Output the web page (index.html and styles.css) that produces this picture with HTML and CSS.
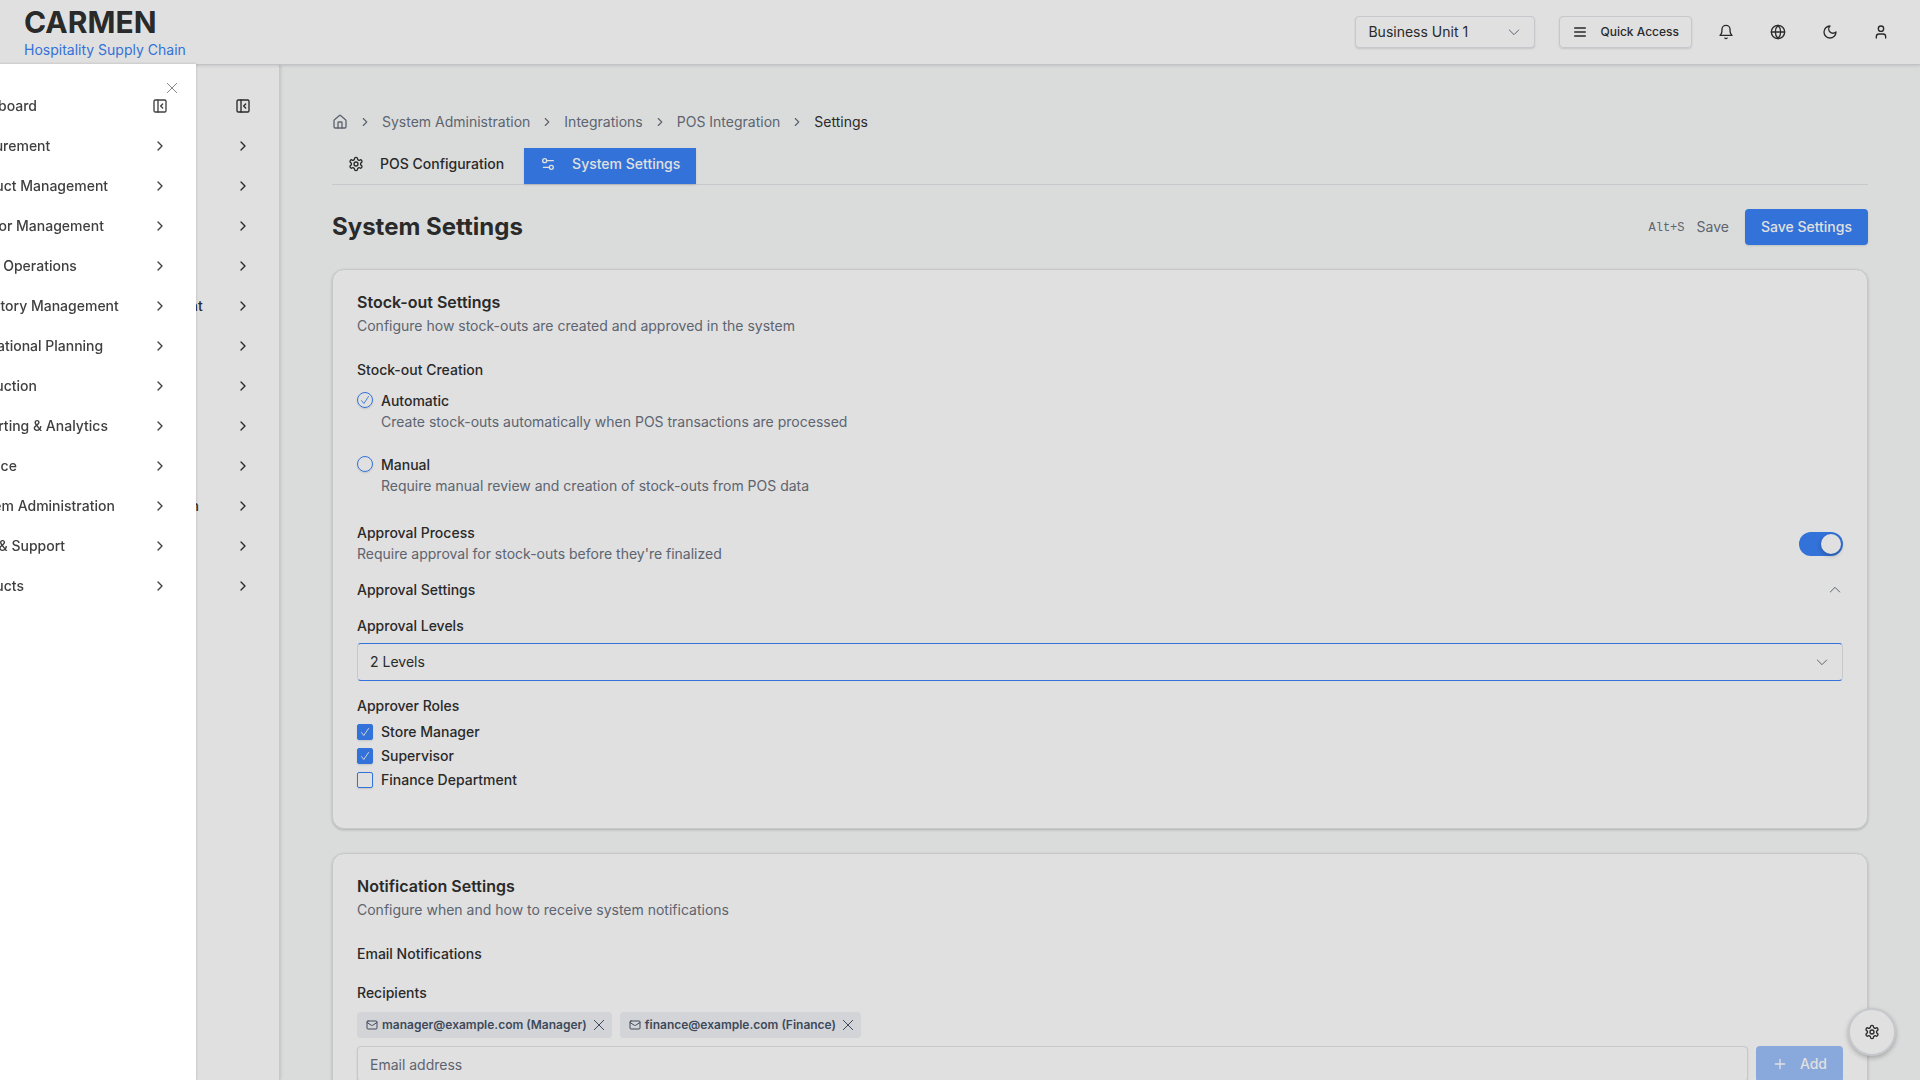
FILE: index.html
```html
<!DOCTYPE html>
<html lang="en">
<head>
<meta charset="utf-8">
<title>System Settings</title>
<link rel="stylesheet" href="styles.css">
</head>
<body>
<svg class="sprite" aria-hidden="true">
  <symbol id="chevron-right" viewBox="0 0 24 24"><path d="m9 18 6-6-6-6"/></symbol>
  <symbol id="chevron-down" viewBox="0 0 24 24"><path d="m5 9 7 7 7-7"/></symbol>
  <symbol id="chevron-up" viewBox="0 0 24 24"><path d="m5 15 7-7 7 7"/></symbol>
  <symbol id="panel" viewBox="0 0 24 24"><rect width="18" height="18" x="3" y="3" rx="2"/><path d="M9 3v18M16 15l-3-3 3-3"/></symbol>
  <symbol id="close" viewBox="0 0 24 24"><path d="M19 5 5 19M5 5l14 14"/></symbol>
  <symbol id="menu" viewBox="0 0 24 24"><path d="M4 6h16M4 12h16M4 18h16"/></symbol>
  <symbol id="bell" viewBox="0 0 24 24"><path d="M6 8a6 6 0 0 1 12 0c0 7 3 9 3 9H3s3-2 3-9M10.3 21a1.94 1.94 0 0 0 3.4 0"/></symbol>
  <symbol id="globe" viewBox="0 0 24 24"><circle cx="12" cy="12" r="10"/><path d="M12 2a14.5 14.5 0 0 0 0 20 14.5 14.5 0 0 0 0-20M2 12h20"/></symbol>
  <symbol id="moon" viewBox="0 0 24 24"><path d="M12 3a6 6 0 0 0 9 9 9 9 0 1 1-9-9Z"/></symbol>
  <symbol id="user" viewBox="0 0 24 24"><path d="M19 21v-2a4 4 0 0 0-4-4H9a4 4 0 0 0-4 4v2"/><circle cx="12" cy="7" r="4"/></symbol>
  <symbol id="home" viewBox="0 0 24 24"><path d="M15 21v-8a1 1 0 0 0-1-1h-4a1 1 0 0 0-1 1v8"/><path d="M3 10a2 2 0 0 1 .709-1.528l7-5.999a2 2 0 0 1 2.582 0l7 5.999A2 2 0 0 1 21 10v9a2 2 0 0 1-2 2H5a2 2 0 0 1-2-2z"/></symbol>
  <symbol id="cog" viewBox="0 0 24 24"><path d="M12.22 2h-.44a2 2 0 0 0-2 2v.18a2 2 0 0 1-1 1.73l-.43.25a2 2 0 0 1-2 0l-.15-.08a2 2 0 0 0-2.73.73l-.22.38a2 2 0 0 0 .73 2.73l.15.1a2 2 0 0 1 1 1.72v.51a2 2 0 0 1-1 1.74l-.15.09a2 2 0 0 0-.73 2.73l.22.38a2 2 0 0 0 2.73.73l.15-.08a2 2 0 0 1 2 0l.43.25a2 2 0 0 1 1 1.73V20a2 2 0 0 0 2 2h.44a2 2 0 0 0 2-2v-.18a2 2 0 0 1 1-1.73l.43-.25a2 2 0 0 1 2 0l.15.08a2 2 0 0 0 2.73-.73l.22-.39a2 2 0 0 0-.73-2.73l-.15-.08a2 2 0 0 1-1-1.74v-.5a2 2 0 0 1 1-1.74l.15-.09a2 2 0 0 0 .73-2.73l-.22-.38a2 2 0 0 0-2.73-.73l-.15.08a2 2 0 0 1-2 0l-.43-.25a2 2 0 0 1-1-1.73V4a2 2 0 0 0-2-2z"/><circle cx="12" cy="12" r="3"/></symbol>
  <symbol id="sliders" viewBox="0 0 24 24"><path d="M20 7h-9M14 17H5"/><circle cx="17" cy="17" r="3"/><circle cx="7" cy="7" r="3"/></symbol>
  <symbol id="mail" viewBox="0 0 24 24"><rect width="20" height="16" x="2" y="4" rx="2"/><path d="m22 7-8.97 5.7a1.94 1.94 0 0 1-2.06 0L2 7"/></symbol>
  <symbol id="plus" viewBox="0 0 24 24"><path d="M5 12h14M12 5v14"/></symbol>
  <symbol id="check" viewBox="0 0 24 24"><path d="m6 13 4 5 8-12"/></symbol>
</svg>

<header class="topbar">
  <div class="brand">
    <strong class="brand-name">CARMEN</strong>
    <span class="brand-sub">Hospitality Supply Chain</span>
  </div>
  <div class="topbar-tools">
    <div class="select-wrap unit-select">
      <select class="select" aria-label="Business unit"><option>Business Unit 1</option></select>
      <svg class="icon thin"><use href="#chevron-down"/></svg>
    </div>
    <button class="quick" type="button"><svg class="icon"><use href="#menu"/></svg>Quick Access</button>
    <div class="icon-buttons">
      <button class="icon-button" type="button" aria-label="Notifications"><svg class="icon"><use href="#bell"/></svg></button>
      <button class="icon-button" type="button" aria-label="Language"><svg class="icon"><use href="#globe"/></svg></button>
      <button class="icon-button" type="button" aria-label="Theme"><svg class="icon"><use href="#moon"/></svg></button>
      <button class="icon-button account" type="button" aria-label="Account"><svg class="icon"><use href="#user"/></svg></button>
    </div>
  </div>
</header>

<div class="shell">
  <nav class="sidebar" aria-label="Main">
    <ul class="menu">
      <li><a class="menu-item" href="#"><span>Dashboard</span><svg class="icon"><use href="#panel"/></svg></a></li>
      <li><a class="menu-item" href="#"><span>Procurement</span><svg class="icon"><use href="#chevron-right"/></svg></a></li>
      <li><a class="menu-item" href="#"><span>Product Management</span><svg class="icon"><use href="#chevron-right"/></svg></a></li>
      <li><a class="menu-item" href="#"><span>Vendor Management</span><svg class="icon"><use href="#chevron-right"/></svg></a></li>
      <li><a class="menu-item" href="#"><span>Store Operations</span><svg class="icon"><use href="#chevron-right"/></svg></a></li>
      <li><a class="menu-item" href="#"><span>Inventory Management</span><svg class="icon"><use href="#chevron-right"/></svg></a></li>
      <li><a class="menu-item" href="#"><span>Operational Planning</span><svg class="icon"><use href="#chevron-right"/></svg></a></li>
      <li><a class="menu-item" href="#"><span>Production</span><svg class="icon"><use href="#chevron-right"/></svg></a></li>
      <li><a class="menu-item" href="#"><span>Reporting &amp; Analytics</span><svg class="icon"><use href="#chevron-right"/></svg></a></li>
      <li><a class="menu-item" href="#"><span>Finance</span><svg class="icon"><use href="#chevron-right"/></svg></a></li>
      <li><a class="menu-item" href="#"><span>System Administration</span><svg class="icon"><use href="#chevron-right"/></svg></a></li>
      <li><a class="menu-item" href="#"><span>Help &amp; Support</span><svg class="icon"><use href="#chevron-right"/></svg></a></li>
      <li><a class="menu-item" href="#"><span>Products</span><svg class="icon"><use href="#chevron-right"/></svg></a></li>
    </ul>
  </nav>

  <main class="main">
    <nav class="breadcrumb" aria-label="Breadcrumb">
      <a href="#" aria-label="Home"><svg class="icon"><use href="#home"/></svg></a>
      <svg class="icon small"><use href="#chevron-right"/></svg>
      <a href="#">System Administration</a>
      <svg class="icon small"><use href="#chevron-right"/></svg>
      <a href="#">Integrations</a>
      <svg class="icon small"><use href="#chevron-right"/></svg>
      <a href="#">POS Integration</a>
      <svg class="icon small"><use href="#chevron-right"/></svg>
      <span class="current">Settings</span>
    </nav>

    <div class="tabs">
      <a class="tab" href="#"><svg class="icon"><use href="#cog"/></svg>POS Configuration</a>
      <a class="tab active" href="#"><svg class="icon"><use href="#sliders"/></svg>System Settings</a>
    </div>

    <div class="page-head">
      <h1>System Settings</h1>
      <div class="page-actions">
        <kbd>Alt+S</kbd>
        <span class="hint">Save</span>
        <button class="primary" type="button">Save Settings</button>
      </div>
    </div>

    <section class="card">
      <h2>Stock-out Settings</h2>
      <p class="lead">Configure how stock-outs are created and approved in the system</p>
      <fieldset class="radios">
        <legend>Stock-out Creation</legend>
        <div class="choice">
          <span class="control"><input type="radio" name="creation" id="automatic" checked><svg class="icon tick"><use href="#check"/></svg></span>
          <div><label for="automatic">Automatic</label><p>Create stock-outs automatically when POS transactions are processed</p></div>
        </div>
        <div class="choice">
          <span class="control"><input type="radio" name="creation" id="manual"></span>
          <div><label for="manual">Manual</label><p>Require manual review and creation of stock-outs from POS data</p></div>
        </div>
      </fieldset>
      <div class="toggle-row">
        <div><label for="approval">Approval Process</label><p>Require approval for stock-outs before they're finalized</p></div>
        <input class="switch" type="checkbox" role="switch" id="approval" checked>
      </div>
      <button class="collapse" type="button">Approval Settings<svg class="icon thin"><use href="#chevron-up"/></svg></button>
      <div class="field">
        <label for="levels">Approval Levels</label>
        <div class="select-wrap levels">
          <select class="select" id="levels"><option>2 Levels</option></select>
          <svg class="icon thin"><use href="#chevron-down"/></svg>
        </div>
      </div>
      <fieldset class="roles">
        <legend>Approver Roles</legend>
        <div class="role"><span class="control"><input type="checkbox" id="store-manager" checked><svg class="icon tick light"><use href="#check"/></svg></span><label for="store-manager">Store Manager</label></div>
        <div class="role"><span class="control"><input type="checkbox" id="supervisor" checked><svg class="icon tick light"><use href="#check"/></svg></span><label for="supervisor">Supervisor</label></div>
        <div class="role"><span class="control"><input type="checkbox" id="finance"></span><label for="finance">Finance Department</label></div>
      </fieldset>
    </section>

    <section class="card">
      <h2>Notification Settings</h2>
      <p class="lead">Configure when and how to receive system notifications</p>
      <h3>Email Notifications</h3>
      <label class="recipients" for="email">Recipients</label>
      <div class="chips">
        <span class="chip"><svg class="icon mini"><use href="#mail"/></svg>manager@example.com (Manager)<button type="button" aria-label="Remove manager"><svg class="icon"><use href="#close"/></svg></button></span>
        <span class="chip"><svg class="icon mini"><use href="#mail"/></svg>finance@example.com (Finance)<button type="button" aria-label="Remove finance"><svg class="icon"><use href="#close"/></svg></button></span>
      </div>
      <div class="add-row">
        <input class="text-input" type="email" id="email" placeholder="Email address">
        <button class="primary add" type="button" disabled><svg class="icon"><use href="#plus"/></svg>Add</button>
      </div>
    </section>
  </main>
</div>

<button class="fab" type="button" aria-label="Settings"><svg class="icon"><use href="#cog"/></svg></button>
<div class="overlay"></div>

<aside class="drawer" aria-label="Menu">
  <button class="drawer-close" type="button" aria-label="Close"><svg class="icon"><use href="#close"/></svg></button>
  <ul class="menu">
    <li><a class="menu-item" href="#"><span>Dashboard</span><svg class="icon"><use href="#panel"/></svg></a></li>
    <li><a class="menu-item" href="#"><span>Procurement</span><svg class="icon"><use href="#chevron-right"/></svg></a></li>
    <li><a class="menu-item" href="#"><span>Product Management</span><svg class="icon"><use href="#chevron-right"/></svg></a></li>
    <li><a class="menu-item" href="#"><span>Vendor Management</span><svg class="icon"><use href="#chevron-right"/></svg></a></li>
    <li><a class="menu-item" href="#"><span>Store Operations</span><svg class="icon"><use href="#chevron-right"/></svg></a></li>
    <li><a class="menu-item" href="#"><span>Inventory Management</span><svg class="icon"><use href="#chevron-right"/></svg></a></li>
    <li><a class="menu-item" href="#"><span>Operational Planning</span><svg class="icon"><use href="#chevron-right"/></svg></a></li>
    <li><a class="menu-item" href="#"><span>Production</span><svg class="icon"><use href="#chevron-right"/></svg></a></li>
    <li><a class="menu-item" href="#"><span>Reporting &amp; Analytics</span><svg class="icon"><use href="#chevron-right"/></svg></a></li>
    <li><a class="menu-item" href="#"><span>Finance</span><svg class="icon"><use href="#chevron-right"/></svg></a></li>
    <li><a class="menu-item" href="#"><span>System Administration</span><svg class="icon"><use href="#chevron-right"/></svg></a></li>
    <li><a class="menu-item" href="#"><span>Help &amp; Support</span><svg class="icon"><use href="#chevron-right"/></svg></a></li>
    <li><a class="menu-item" href="#"><span>Products</span><svg class="icon"><use href="#chevron-right"/></svg></a></li>
  </ul>
</aside>
</body>
</html>
```
FILE: styles.css
```css
:root {
  --ink: #303030;
  --muted: #6b7280;
  --line: #e2e4e9;
  --blue: #3b82f6;
  --page: #f9fbfa;
}

* { box-sizing: border-box; }

html { overflow: hidden; }

body {
  margin: 0;
  height: 100vh;
  display: flex;
  flex-direction: column;
  overflow: hidden;
  font: 14px/20px Inter, "Liberation Sans", sans-serif;
  color: var(--ink);
  background: var(--page);
}

button, input, select { font: inherit; color: inherit; margin: 0; }
button { border: 0; padding: 0; background: none; }
a { color: inherit; text-decoration: none; }
h1, h2, h3, p, ul, fieldset, legend { margin: 0; padding: 0; border: 0; }
fieldset { min-width: 0; }
label, legend, h3 { font-size: 14px; font-weight: 500; line-height: 20px; }

.sprite { display: none; }
.icon {
  width: 16px;
  height: 16px;
  flex: none;
  display: block;
  fill: none;
  stroke: currentColor;
  stroke-width: 2;
  stroke-linecap: round;
  stroke-linejoin: round;
}
.small { width: 14px; height: 14px; }
.mini { width: 12px; height: 12px; }
.thin { stroke-width: 1.5; color: var(--muted); }

/* Top bar */
.topbar {
  flex: none;
  height: 65px;
  padding: 0 24px;
  display: flex;
  align-items: center;
  justify-content: space-between;
  background: #fff;
  border-bottom: 1px solid #dcdee3;
  box-shadow: 0 1px 3px rgba(0, 0, 0, .12);
  z-index: 2;
}
.brand { display: flex; flex-direction: column; }
.brand-name { font-size: 30px; line-height: 36px; font-weight: 700; }
.brand-sub { color: var(--blue); }
.topbar-tools { display: flex; align-items: center; gap: 24px; }
.select-wrap { display: grid; align-items: center; }
.select-wrap > * { grid-area: 1 / 1; }
.select-wrap .icon { justify-self: end; margin-right: 13px; pointer-events: none; }
.select {
  appearance: none;
  width: 100%;
  height: 32px;
  padding: 0 12px;
  border: 1px solid var(--line);
  border-radius: 4px;
  background: #fff;
  box-shadow: 0 1px 2px rgba(0, 0, 0, .12);
}
.unit-select { width: 180px; }
.quick {
  height: 32px;
  padding: 0 12px;
  display: flex;
  align-items: center;
  gap: 12px;
  font-size: 12px;
  font-weight: 500;
  border: 1px solid var(--line);
  border-radius: 4px;
  box-shadow: 0 1px 2px rgba(0, 0, 0, .12);
}
.icon-buttons { display: flex; gap: 20px; margin-left: -6px; }
.icon-button { width: 32px; height: 32px; display: grid; place-items: center; }
.account { width: 30px; }

/* Navigation */
.shell { flex: 1; min-height: 0; display: flex; }
.sidebar {
  flex: none;
  width: 280px;
  padding-top: 21px;
  background: #fff;
  border-right: 1px solid var(--line);
  box-shadow: 1px 0 3px rgba(0, 0, 0, .12);
  z-index: 1;
}
.menu { list-style: none; }
.menu-item {
  height: 40px;
  padding: 0 28px 0 48px;
  display: flex;
  align-items: center;
  justify-content: space-between;
  font-weight: 500;
  white-space: nowrap;
}

.drawer {
  position: fixed;
  top: 64px;
  bottom: 0;
  left: -84px;
  width: 280px;
  padding-top: 22px;
  background: #fff;
  box-shadow: 0 0 3px rgba(0, 0, 0, .2);
  color: #404040;
  z-index: 5;
}
.drawer-close { position: absolute; top: 16px; right: 16px; color: #858585; }
.drawer-close .icon, .chip button .icon { stroke-width: 1.5; }
.overlay { position: fixed; inset: 0; background: rgba(0, 0, 0, .12); z-index: 4; }

/* Content */
.main { flex: 1; min-width: 0; padding: 47px 52px; }
.breadcrumb { display: flex; align-items: center; gap: 10px; height: 20px; color: var(--muted); }
.breadcrumb .current { color: var(--ink); }
.tabs { display: flex; gap: 4px; margin-top: 16px; border-bottom: 1px solid var(--line); }
.tab { height: 36px; padding: 0 16px 4px; display: flex; align-items: center; gap: 16px; font-weight: 500; }
.tab.active { background: var(--blue); color: #fff; box-shadow: 0 1px 2px rgba(0, 0, 0, .12); }
.page-head { display: flex; justify-content: space-between; align-items: center; margin-top: 24px; }
h1 { font-size: 24px; line-height: 32px; font-weight: 700; }
.page-actions { display: flex; align-items: center; color: var(--muted); }
kbd { font: 12px/20px "Liberation Mono", monospace; padding-top: 2px; }
.hint { margin: 0 16px 0 12px; }
.primary {
  height: 36px;
  padding: 0 16px;
  border-radius: 4px;
  background: var(--blue);
  color: #fff;
  font-weight: 500;
  box-shadow: 0 1px 2px rgba(0, 0, 0, .12);
}

.card {
  margin-top: 24px;
  padding: 24px;
  background: #fff;
  border: 1px solid var(--line);
  border-radius: 12px;
  box-shadow: 0 1px 3px rgba(0, 0, 0, .2);
}
h2 { font-size: 16px; line-height: 16px; font-weight: 600; }
.lead { margin: 6px 0 24px; color: var(--muted); }
.choice { display: flex; gap: 8px; margin-top: 23px; }
.choice:first-of-type { margin-top: 11px; }
.choice p, .toggle-row p { margin-top: 1px; color: var(--muted); }
.choice label, .toggle-row label { display: block; }
.control { display: grid; place-items: center; }
.choice .control { align-self: start; padding-top: 1px; }
.control > * { grid-area: 1 / 1; }
.control input {
  appearance: none;
  width: 16px;
  height: 16px;
  border: 1px solid var(--blue);
  border-radius: 2px;
  box-shadow: 0 1px 2px rgba(0, 0, 0, .12);
}
.control input[type="radio"] { border-radius: 50%; }
.control input[type="checkbox"]:checked { background: var(--blue); }
.tick { width: 14px; height: 14px; stroke-width: 1.5; color: var(--blue); pointer-events: none; }
.tick.light { color: #fff; }

.toggle-row { display: flex; justify-content: space-between; align-items: center; margin-top: 27px; }
.switch { appearance: none; width: 44px; height: 24px; padding: 2px; border-radius: 12px; background: var(--blue); }
.switch::before {
  content: "";
  display: block;
  width: 20px;
  height: 20px;
  margin-left: 20px;
  border-radius: 50%;
  background: #fff;
  box-shadow: 0 2px 4px rgba(0, 0, 0, .25);
}
.collapse { width: 100%; display: flex; justify-content: space-between; align-items: center; margin-top: 16px; font-weight: 500; }
.field { display: flex; flex-direction: column; gap: 7px; margin-top: 16px; }
.levels .select { height: 38px; border-color: var(--blue) var(--line); box-shadow: none; }
.roles { margin-top: 15px; padding-bottom: 12px; }
.role { display: flex; align-items: center; gap: 8px; height: 24px; }
.role:first-of-type { margin-top: 4px; }

.recipients { display: block; margin-top: 19px; }
.chips { display: flex; gap: 8px; margin: 9px 0 8px; }
.chip {
  height: 26px;
  padding: 0 5px 0 9px;
  display: flex;
  align-items: center;
  gap: 4px;
  border-radius: 4px;
  background: #f1f2f5;
  color: #475569;
  font-size: 12px;
  font-weight: 600;
}
.add-row { display: flex; gap: 8px; }
.text-input {
  flex: 1;
  min-width: 0;
  height: 36px;
  padding: 0 12px;
  border: 1px solid var(--line);
  border-radius: 4px;
  background: #fff;
  box-shadow: 0 1px 2px rgba(0, 0, 0, .12);
}
.text-input::placeholder { color: var(--muted); opacity: 1; }
.add { display: flex; align-items: center; gap: 12px; background: #9dc0fa; box-shadow: none; }

.fab {
  position: fixed;
  right: 24px;
  bottom: 24px;
  width: 48px;
  height: 48px;
  display: grid;
  place-items: center;
  border: 2px solid var(--line);
  border-radius: 50%;
  background: #fff;
  box-shadow: 0 2px 5px rgba(0, 0, 0, .25);
  z-index: 3;
}
```
